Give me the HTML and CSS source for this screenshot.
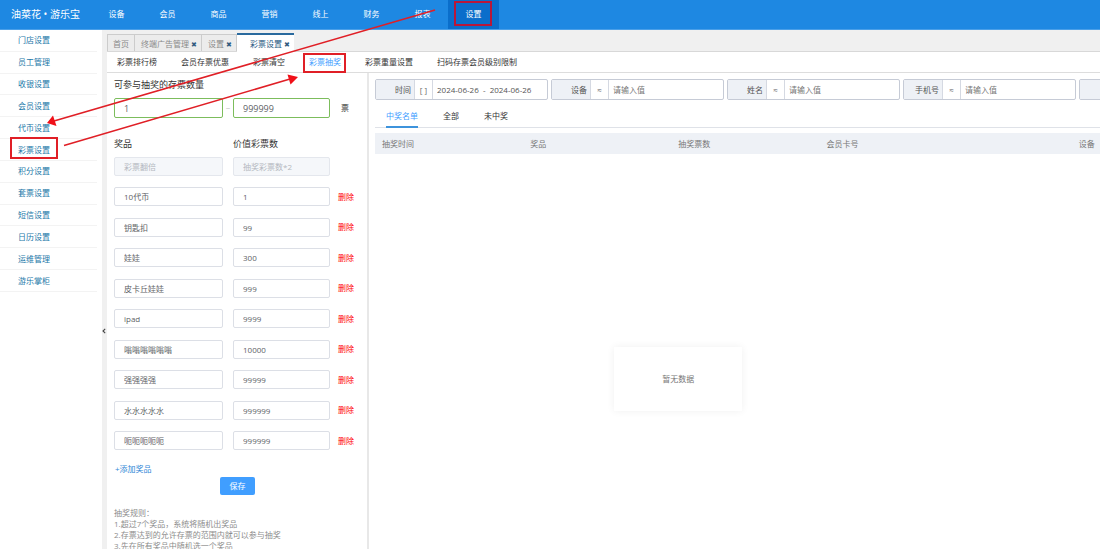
FILE: index.html
```html
<!DOCTYPE html>
<html lang="zh-CN">
<head>
<meta charset="utf-8">
<title>油菜花 · 游乐宝</title>
<link rel="stylesheet" href="styles.css">
</head>
<body>
<header class="topbar">
  <div class="brand">油菜花 • 游乐宝</div>
  <nav class="topnav">
    <a href="#">设备</a><a href="#">会员</a><a href="#">商品</a><a href="#">营销</a><a href="#">线上</a><a href="#">财务</a><a href="#">报表</a><a href="#" class="active">设置</a>
  </nav>
</header>
<div class="body">
  <nav class="sidebar">
    <ul class="menu">
      <li><a href="#">门店设置</a></li>
      <li><a href="#">员工管理</a></li>
      <li><a href="#">收银设置</a></li>
      <li><a href="#">会员设置</a></li>
      <li><a href="#">代币设置</a></li>
      <li><a href="#">彩票设置</a></li>
      <li><a href="#">积分设置</a></li>
      <li><a href="#">套票设置</a></li>
      <li><a href="#">短信设置</a></li>
      <li><a href="#">日历设置</a></li>
      <li><a href="#">运维管理</a></li>
      <li><a href="#">游乐掌柜</a></li>
    </ul>
  </nav>
  <div class="gutter">
    <button class="collapse" type="button" aria-label="收起菜单"><svg width="4" height="6" viewBox="0 0 4 6"><path d="M3.2 0.8L1 3l2.2 2.2" fill="none" stroke="#444" stroke-width="1.1"/></svg></button>
  </div>
  <div class="workspace">
    <div class="pagetabs">
      <a href="#" class="pagetab">首页</a>
      <a href="#" class="pagetab">终端广告管理 <span class="x">✖</span></a>
      <a href="#" class="pagetab">设置 <span class="x">✖</span></a>
      <a href="#" class="pagetab current">彩票设置 <span class="x">✖</span></a>
    </div>
    <nav class="subtabs">
      <a href="#">彩票排行榜</a>
      <a href="#">会员存票优惠</a>
      <a href="#">彩票清空</a>
      <a href="#" class="active">彩票抽奖</a>
      <a href="#">彩票重量设置</a>
      <a href="#">扫码存票会员级别限制</a>
    </nav>
    <div class="panes">
      <form class="settings">
        <h2 class="caption">可参与抽奖的存票数量</h2>
        <div class="row range">
          <input class="field valid" type="text" value="1" aria-label="最小票数">
          <span class="dash">–</span>
          <input class="field valid" type="text" value="999999" aria-label="最大票数">
          <span class="unit">票</span>
        </div>
        <div class="row heads"><span>奖品</span><span></span><span>价值彩票数</span></div>
        <div class="prizes">
          <div class="row"><input class="field" type="text" value="彩票翻倍" disabled aria-label="奖品"><span></span><input class="field" type="text" value="抽奖彩票数*2" disabled aria-label="价值彩票数"></div>
          <div class="row"><input class="field" type="text" value="10代币" aria-label="奖品"><span></span><input class="field" type="text" value="1" aria-label="价值彩票数"><button class="del" type="button">删除</button></div>
          <div class="row"><input class="field" type="text" value="钥匙扣" aria-label="奖品"><span></span><input class="field" type="text" value="99" aria-label="价值彩票数"><button class="del" type="button">删除</button></div>
          <div class="row"><input class="field" type="text" value="娃娃" aria-label="奖品"><span></span><input class="field" type="text" value="300" aria-label="价值彩票数"><button class="del" type="button">删除</button></div>
          <div class="row"><input class="field" type="text" value="皮卡丘娃娃" aria-label="奖品"><span></span><input class="field" type="text" value="999" aria-label="价值彩票数"><button class="del" type="button">删除</button></div>
          <div class="row"><input class="field" type="text" value="ipad" aria-label="奖品"><span></span><input class="field" type="text" value="9999" aria-label="价值彩票数"><button class="del" type="button">删除</button></div>
          <div class="row"><input class="field" type="text" value="嗡嗡嗡嗡嗡嗡" aria-label="奖品"><span></span><input class="field" type="text" value="10000" aria-label="价值彩票数"><button class="del" type="button">删除</button></div>
          <div class="row"><input class="field" type="text" value="强强强强" aria-label="奖品"><span></span><input class="field" type="text" value="99999" aria-label="价值彩票数"><button class="del" type="button">删除</button></div>
          <div class="row"><input class="field" type="text" value="水水水水水" aria-label="奖品"><span></span><input class="field" type="text" value="999999" aria-label="价值彩票数"><button class="del" type="button">删除</button></div>
          <div class="row"><input class="field" type="text" value="呃呃呃呃呃" aria-label="奖品"><span></span><input class="field" type="text" value="999999" aria-label="价值彩票数"><button class="del" type="button">删除</button></div>
        </div>
        <a href="#" class="add">+添加奖品</a>
        <button class="save" type="button">保存</button>
        <div class="rules">
          <p>抽奖规则：</p>
          <p>1.超过7个奖品，系统将随机出奖品</p>
          <p>2.存票达到的允许存票的范围内就可以参与抽奖</p>
          <p>3.先在所有奖品中随机选一个奖品</p>
        </div>
      </form>
      <main class="results">
        <div class="filters">
          <div class="filter"><label for="f1">时间</label><span class="op">[ ]</span><input id="f1" type="text" value="2024-06-26  -  2024-06-26"></div>
          <div class="filter"><label for="f2">设备</label><span class="op">≈</span><input id="f2" type="text" placeholder="请输入值"></div>
          <div class="filter"><label for="f3">姓名</label><span class="op">≈</span><input id="f3" type="text" placeholder="请输入值"></div>
          <div class="filter"><label for="f4">手机号</label><span class="op">≈</span><input id="f4" type="text" placeholder="请输入值"></div>
          <div class="filter"><label for="f5"></label><input id="f5" type="text" aria-label="更多条件"></div>
        </div>
        <div class="listtabs">
          <a href="#" class="active">中奖名单</a><a href="#">全部</a><a href="#">未中奖</a>
        </div>
        <table class="grid">
          <colgroup><col class="c"><col class="c"><col class="c"><col class="cw"><col class="c"></colgroup>
          <thead><tr><th>抽奖时间</th><th>奖品</th><th>抽奖票数</th><th>会员卡号</th><th>设备</th></tr></thead>
        </table>
        <div class="empty">暂无数据</div>
      </main>
    </div>
  </div>
</div>
<svg class="marks" width="500" height="170" viewBox="0 0 500 170" aria-hidden="true">
  <g fill="none" stroke="#e01f26" stroke-width="2">
    <rect x="455" y="2" width="36" height="23" stroke="#b8173a"/>
    <rect x="11" y="138" width="46" height="20"/>
    <rect x="304" y="54" width="41" height="18"/>
    <path d="M435 10L54 121M64 145.500L290 79" stroke-width="1.600"/>
  </g>
  <path d="M47 123L53 115.500L56.500 126ZM298 77L287.500 74.500L290.500 84.500Z" fill="#f01018"/>
</svg>
</body>
</html>
```
FILE: styles.css
```css
* { box-sizing: border-box; }
body {
  position: relative;
  display: flex;
  flex-direction: column;
  height: 100vh;
  margin: 0;
  overflow: hidden;
  background: #fff;
  color: #333;
  font: 8px/12px "Open Sans", "Noto Sans CJK SC", sans-serif;
}
a { color: inherit; text-decoration: none; }
button, input { font: inherit; color: inherit; margin: 0; }
ul, p, h2 { margin: 0; padding: 0; }

.marks { position: absolute; top: 0; left: 0; pointer-events: none; }

.topbar {
  display: flex;
  flex: none;
  height: 30px;
  background: #1e88e2;
  border-bottom: 1px solid #4a9fe8;
  color: #fff;
}
.brand { width: 91px; padding-left: 11px; font-size: 10px; line-height: 28px; white-space: nowrap; }
.topnav { display: flex; }
.topnav a { width: 51px; line-height: 28px; text-align: center; }
.topnav .active { background: #0a6ecb; }

.body { display: flex; flex: 1; min-height: 0; }
.sidebar { flex: none; width: 102px; padding-right: 5px; }
.menu { display: flex; flex-direction: column; height: 262px; list-style: none; }
.menu li {
  display: flex;
  flex: 1;
  align-items: center;
  padding-left: 18px;
  border-bottom: 1px solid #f3f3f3;
  color: #1b77a8;
}
.gutter { flex: none; width: 5px; padding-top: 298px; background: #f0f0f0; }
.collapse { display: block; padding: 0; border: 0; background: none; line-height: 0; }

.workspace { display: flex; flex: 1; flex-direction: column; min-width: 0; }
.pagetabs {
  display: flex;
  flex: none;
  height: 22px;
  padding-top: 3px;
  background: #f0f0f0;
  border-bottom: 1px solid #d8d8d8;
}
.pagetab {
  margin-top: 1px;
  padding: 0 4px 0 6px;
  border: 1px solid #ccc;
  border-width: 1px 1px 0 0;
  background: #ececec;
  color: #8a8a8a;
  line-height: 17px;
  white-space: nowrap;
}
.pagetab:first-child { border-left-width: 1px; padding: 0 5px; }
.pagetab .x { color: #335c80; font: 7px "DejaVu Sans", sans-serif; }
.pagetab.current {
  margin: 0 0 -1px;
  padding: 0 4px 0 13px;
  border: 0;
  border-top: 2px solid #2a6a9e;
  background: #fff;
  color: #25577f;
}
.subtabs {
  display: flex;
  flex: none;
  gap: 24px;
  height: 21px;
  padding-left: 10px;
  border-bottom: 1px solid #ddd;
  line-height: 20px;
  white-space: nowrap;
}
.subtabs .active { color: #409eff; }
.panes { display: flex; flex: 1; min-height: 0; }

.settings {
  flex: none;
  width: 262px;
  padding: 5px 7px 0;
  overflow: hidden;
  border-right: 2px solid #e8e8e8;
}
.caption { font-size: 9px; font-weight: 400; line-height: 14px; }
.row { display: grid; grid-template-columns: 109px 10px 97px 1fr; align-items: center; }
.range { margin-top: 6px; font-size: 9px; }
.dash { color: #ccc; text-align: center; }
.unit { padding-left: 11px; font-size: 8px; }
.heads { margin-top: 19px; font-size: 9px; line-height: 14px; }
.field {
  width: 100%;
  height: 19px;
  padding: 0 9px;
  border: 1px solid #dcdfe6;
  border-radius: 2px;
  background: #fff;
  color: #606266;
}
.field.valid { height: 20px; border-color: #7cbd5c; }
.field:disabled { background: #f5f7fa; border-color: #e4e7ed; color: #b4b8c0; }
.prizes { display: grid; grid-auto-rows: 1fr; height: 305px; }
.del { padding: 0 0 0 8px; border: 0; background: none; color: #f00; text-align: left; }
.add { display: block; margin-top: 7px; padding-left: 1px; color: #2f86d6; }
.save {
  display: block;
  width: 35px;
  height: 18px;
  margin: 2px 0 0 106px;
  padding: 0;
  border: 0;
  border-radius: 2px;
  background: #409eff;
  color: #fff;
}
.rules { margin-top: 12px; color: #8c8c8c; line-height: 11px; white-space: nowrap; }

.results { flex: 1; min-width: 0; padding: 6px 0 0 6px; overflow: hidden; }
.filters { display: flex; gap: 3px; }
.filter {
  display: flex;
  flex: none;
  width: 173px;
  height: 21px;
  overflow: hidden;
  border: 1px solid #c6cbd6;
  border-radius: 2px;
  line-height: 19px;
}
.filter label { flex: none; width: 38px; padding-right: 3px; background: #eef1f6; color: #555; text-align: right; }
.filter .op { flex: none; width: 19px; border: 1px solid #d5d9e2; border-width: 0 1px; color: #666; text-align: center; }
.filter input { flex: 1; min-width: 0; padding: 0 0 0 4px; border: 0; background: none; color: #555; white-space: pre; }
.filter ::placeholder { color: #777; opacity: 1; }
.listtabs {
  display: flex;
  gap: 25px;
  height: 28px;
  padding: 6px 0 0 11px;
  border-bottom: 1px solid #dfe2e8;
  line-height: 20px;
}
.listtabs a { height: 22px; }
.listtabs .active { border-bottom: 2px solid #3d93dc; color: #409eff; }
.grid { table-layout: fixed; width: 845px; margin-top: 5px; border-collapse: collapse; background: #eef1f6; }
.c { width: 148px; }
.cw { width: 252px; }
.grid th { height: 21px; padding: 0 7px; color: #777; font-weight: 400; text-align: left; }
.empty {
  width: 128px;
  margin: 193px 0 0 33%;
  padding: 26px 0;
  background: #fff;
  box-shadow: 0 0 8px #f0f0f0;
  color: #777;
  text-align: center;
}
```
